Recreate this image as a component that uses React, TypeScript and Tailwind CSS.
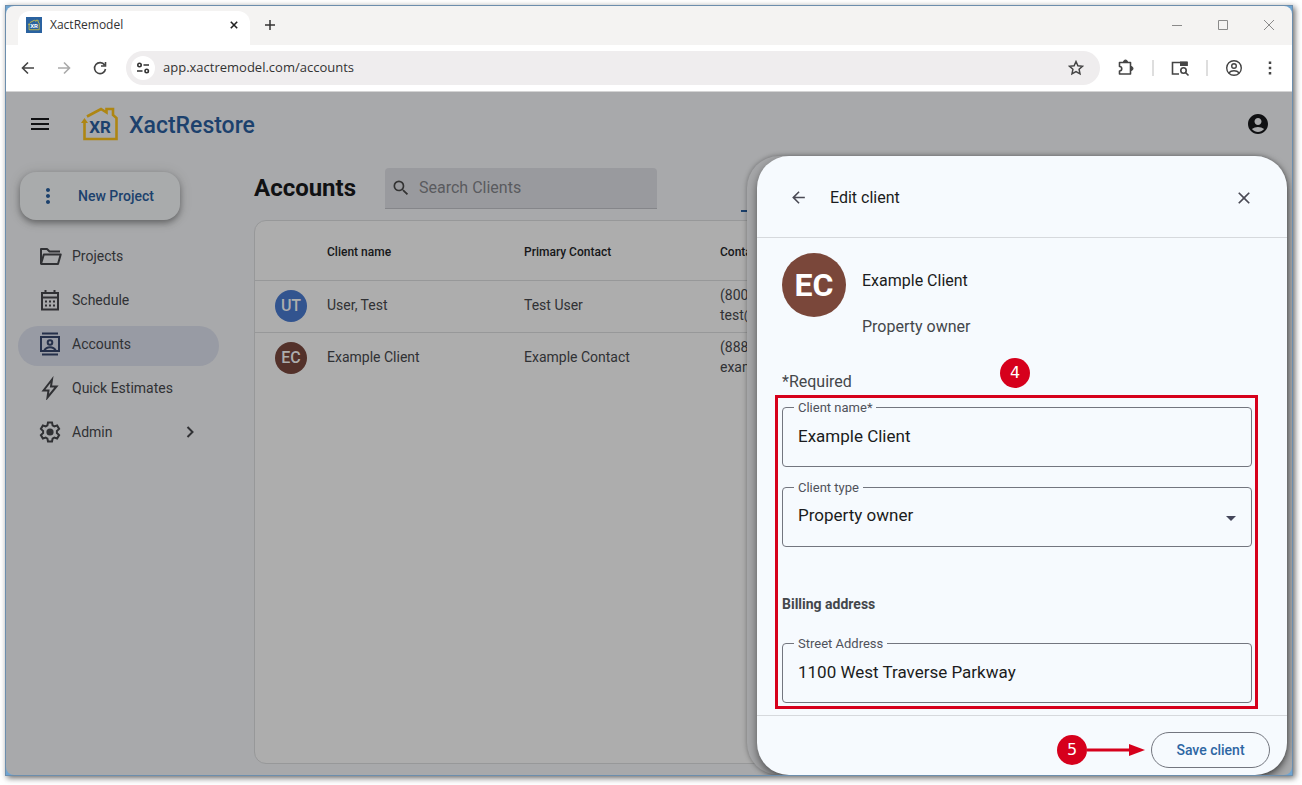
import type { ReactNode } from "react";
import { MdAccountCircle, MdArrowBack, MdClose, MdMenu, MdMoreVert, MdSearch } from "react-icons/md";
import clsx from "clsx";

const navItems = [
  { label: "Projects", icon: "folder" },
  { label: "Schedule", icon: "calendar" },
  { label: "Accounts", icon: "contacts", active: true },
  { label: "Quick Estimates", icon: "bolt" },
  { label: "Admin", icon: "gear", expandable: true },
];

const clients = [
  { initials: "UT", color: "bg-[#32548f]", name: "User, Test", contact: "Test User", phone: "(800)", email: "test@" },
  { initials: "EC", color: "bg-[#53312a]", name: "Example Client", contact: "Example Contact", phone: "(888)", email: "example" },
];

function NavIcon({ name }: { name: string }) {
  return (
    <svg viewBox="0 0 24 24" className="size-6 shrink-0" fill="none" stroke="currentColor" strokeWidth="2">
      {name === "folder" && (
        <path d="M22 7.500H11.500L9 5H3v15.500M3 20h17l2.700-9.500H5.800L3 20" strokeLinejoin="round" />
      )}
      {name === "calendar" && (
        <>
          <path d="M4 5h16v16.500H4zM4 9.500h16M7.500 2v3M16.500 2v3" />
          <path d="M7 13.500h2M11 13.500h2M15 13.500h2M7 17.500h2M11 17.500h2M15 17.500h2" />
        </>
      )}
      {name === "contacts" && (
        <>
          <path d="M4 1.500h16M4 22.500h16M3 5h18v14H3z" />
          <circle cx="12" cy="10.500" r="2.300" />
          <path d="M6 19c1.500-2.700 3.500-3.700 6-3.700s4.500 1 6 3.700" />
        </>
      )}
      {name === "bolt" && <path d="M14 3.500 5.500 14.500h5l-1 7 9-11h-5.500z" />}
      {name === "gear" && (
        <>
          <path d="M10 2.500h4l.6 2.900 1.700 1 2.800-.9 2 3.400-2.200 2v2.200l2.200 2-2 3.400-2.800-.9-1.700 1-.6 2.900h-4l-.6-2.900-1.700-1-2.800.9-2-3.400 2.200-2v-2.200l-2.200-2 2-3.400 2.800.9 1.700-1z" />
          <circle cx="12" cy="12" r="3.600" fill="currentColor" stroke="none" />
        </>
      )}
    </svg>
  );
}

function HouseMark({ className }: { className: string }) {
  return (
    <svg viewBox="0 0 38 34" className={className} fill="none" aria-hidden="true">
      <path d="M3.500 14v18h32V11l-3.500-3V2h-6.500v3.500L20 2 6 9.500" stroke="currentColor" strokeWidth="2.600" />
      <path d="M0 16 3.500 11 7 16z" fill="currentColor" />
    </svg>
  );
}

function TabStrip() {
  return (
    <div className="flex h-[39px] items-end bg-[#f4f3f2] pl-3">
      <div className="relative flex h-[34px] w-[232px] items-center rounded-t-xl bg-white pr-2 pb-1.5 pl-2">
        <span className="relative flex size-4 items-center justify-center bg-[#2a62a0] text-[#d8c63c]">
          <HouseMark className="size-3" />
          <span className="absolute top-[6px] font-['Roboto',sans-serif] text-[6px] leading-none font-bold text-white">XR</span>
        </span>
        <span className="ml-2 font-['Open_Sans',sans-serif] text-xs text-[#333]">XactRemodel</span>
        <button aria-label="Close tab" className="ml-auto flex size-4 items-center justify-center text-[#222]">
          <svg viewBox="0 0 10 10" className="size-2" stroke="currentColor" strokeWidth="2">
            <path d="M1 1l8 8M9 1 1 9" />
          </svg>
        </button>
      </div>
      <button aria-label="New tab" className="mb-[15px] ml-[15px] text-[#333]">
        <svg viewBox="0 0 10 10" className="size-2.5" stroke="currentColor" strokeWidth="1.500">
          <path d="M5 0v10M0 5h10" />
        </svg>
      </button>
      <div className="mb-[15px] ml-auto flex items-center gap-9 pr-[18px] text-[#8a8a8a]">
        {[
          { label: "Minimize", d: "M0 5.500h10" },
          { label: "Maximize", d: "M.5.5h9v9h-9z" },
          { label: "Close", d: "M0 0l10 10M10 0 0 10" },
        ].map((control) => (
          <button key={control.label} aria-label={control.label}>
            <svg viewBox="0 0 10 10" className="size-2.5 overflow-visible" fill="none" stroke="currentColor">
              <path d={control.d} />
            </svg>
          </button>
        ))}
      </div>
    </div>
  );
}

function ToolbarButton({ label, className, children }: { label: string; className?: string; children: ReactNode }) {
  return (
    <button aria-label={label} className={clsx("flex shrink-0 items-center justify-center", className)}>
      <svg viewBox="0 0 20 20" className="size-5" fill="none" stroke="currentColor" strokeWidth="1.600">
        {children}
      </svg>
    </button>
  );
}

function Toolbar() {
  return (
    <div className="flex h-[47px] shrink-0 items-center border-b border-[#d4d4d4] bg-white px-3 text-[#444]">
      <ToolbarButton label="Back">
        <path d="M16 10H5M10 4.500 4.500 10l5.500 5.500" />
      </ToolbarButton>
      <ToolbarButton label="Forward" className="ml-4 text-[#aaa]">
        <path d="M4 10h11M10 4.500l5.500 5.500-5.500 5.500" />
      </ToolbarButton>
      <ToolbarButton label="Reload" className="ml-4">
        <path d="M14.600 7A5.500 5.500 0 1 0 15.500 11M15.500 4v4h-4.500" />
      </ToolbarButton>
      <div className="ml-4 flex h-[34px] flex-1 items-center rounded-full bg-[#efedee] pr-[14px] pl-[5px]">
        <span className="flex size-6 items-center justify-center rounded-full bg-white text-[#333]">
          <svg viewBox="0 0 14 14" className="size-3.5" fill="none" stroke="currentColor" strokeWidth="1.600">
            <circle cx="3.500" cy="4" r="1.700" />
            <circle cx="10.700" cy="10" r="1.700" />
            <path d="M7.500 4H13M1 10h5.500" />
          </svg>
        </span>
        <input
          aria-label="Address"
          defaultValue="app.xactremodel.com/accounts"
          className="ml-2 min-w-0 flex-1 bg-transparent font-['Open_Sans',sans-serif] text-[13px] text-[#333] outline-none"
        />
        <ToolbarButton label="Bookmark">
          <path d="M10 3.500l1.900 4.200 4.600.5-3.400 3.100.9 4.500-4-2.300-4 2.300.9-4.500-3.400-3.100 4.600-.5z" strokeWidth="1.500" />
        </ToolbarButton>
      </div>
      <ToolbarButton label="Extensions" className="ml-4">
        <path d="M3.500 4.500h11v11.500h-11v-3c3 0 3-4.500 0-4.500z" strokeLinejoin="round" />
        <path d="M7.500 4a2 2 0 0 1 4 0zM15 8.500a2 2 0 0 1 0 4z" fill="currentColor" strokeWidth="1" />
      </ToolbarButton>
      <span className="ml-4 h-4 w-0.5 bg-[#dedede]" />
      <ToolbarButton label="Search side panel" className="ml-4">
        <path d="M9 16H2.500V4.500H17V8" />
        <path d="M10 3.500h7.500V8H10z" fill="currentColor" stroke="none" />
        <circle cx="13.500" cy="12.500" r="2.700" />
        <path d="M15.500 14.500l3 3" />
      </ToolbarButton>
      <span className="ml-4 h-4 w-0.5 bg-[#dedede]" />
      <ToolbarButton label="Profile" className="ml-4">
        <circle cx="10" cy="10" r="7.300" strokeWidth="1.400" />
        <circle cx="10" cy="8" r="2.300" strokeWidth="1.400" />
        <path d="M4.700 15c2.800-3 7.800-3 10.600 0" strokeWidth="1.400" />
      </ToolbarButton>
      <ToolbarButton label="Browser menu" className="ml-4">
        <path d="M10 3.500v2.500M10 8.800v2.500M10 14v2.500" strokeWidth="2.500" />
      </ToolbarButton>
    </div>
  );
}

function AppHeader() {
  return (
    <header className="flex h-16 shrink-0 items-center px-[22px]">
      <button aria-label="Toggle menu" className="text-[#101113]">
        <MdMenu className="size-6" />
      </button>
      <a href="#home" className="ml-[29px] flex items-center text-[#1c416d]">
        <span className="relative flex items-center justify-center text-[#ae8613]">
          <HouseMark className="h-[34px] w-[38px]" />
          <span className="absolute top-[12px] text-[17px] leading-none font-bold text-[#1c416d]">XR</span>
        </span>
        <span className="ml-2.5 pt-1 text-[23px] font-medium">XactRestore</span>
      </a>
      <button aria-label="Account" className="ml-auto text-[#101113]">
        <MdAccountCircle className="size-6" />
      </button>
    </header>
  );
}

function Sidebar() {
  return (
    <nav className="w-[213px] shrink-0 pt-4 pl-3 text-[#303134]">
      <button className="ml-0.5 flex h-12 w-40 items-center rounded-2xl bg-[#a9abac] pl-4 text-sm font-medium text-[#1c416d] shadow-[0_3px_6px_rgba(0,0,0,0.35),0_1px_14px_rgba(0,0,0,0.12)]">
        <MdMoreVert className="size-6" />
        <span className="ml-[18px]">New Project</span>
      </button>
      <ul className="mt-[18px] flex flex-col gap-1">
        {navItems.map((item) => (
          <li key={item.label}>
            <a
              href="#nav"
              className={clsx(
                "flex h-10 items-center rounded-full pb-1 pl-5 text-sm",
                item.active && "bg-[#989ba4] text-[#25304a]",
              )}
            >
              <NavIcon name={item.icon} />
              <span className="ml-2.5 text-[#303134]">{item.label}</span>
              {item.expandable && (
                <svg viewBox="0 0 12 12" className="mr-[23px] ml-auto size-3" fill="none" stroke="currentColor" strokeWidth="2">
                  <path d="M3.500 1l5 5-5 5" />
                </svg>
              )}
            </a>
          </li>
        ))}
      </ul>
    </nav>
  );
}

function AccountsPage() {
  return (
    <main className="ml-[35px] flex min-w-0 flex-1 flex-col pt-3 pr-6 pb-[11px]">
      <div className="flex items-start">
        <h1 className="pt-1 text-2xl leading-8 font-bold text-[#101113]">Accounts</h1>
        <label className="ml-[29px] flex h-[41px] w-[272px] items-center rounded-t border-b border-[#85868a] bg-[#999a9e] pl-1.5 text-[#333]">
          <MdSearch className="size-5 shrink-0" />
          <input
            aria-label="Search Clients"
            placeholder="Search Clients"
            className="ml-2 min-w-0 flex-1 bg-transparent text-base outline-none placeholder:text-[#5a5b5e]"
          />
        </label>
        <div className="ml-[84px] h-[44px] flex-1 border-b-2 border-[#1c416d]" />
      </div>
      <div className="mt-2 flex-1 overflow-hidden rounded-xl border border-[#979899] bg-[#adadad]">
        <table className="w-full table-fixed text-left text-sm text-[#303134]">
          <colgroup>
            <col className="w-[72px]" />
            <col className="w-[197px]" />
            <col className="w-[196px]" />
            <col />
          </colgroup>
          <thead>
            <tr className="h-[59px] border-b border-[#979899] text-xs text-[#161719]">
              <th />
              <th className="pt-1 font-medium">Client name</th>
              <th className="pt-1 font-medium">Primary Contact</th>
              <th className="pt-1 font-medium">Contact</th>
            </tr>
          </thead>
          <tbody>
            {clients.map((client) => (
              <tr key={client.initials} className="h-[52px] border-b border-[#979899] last:border-b-0">
                <td className="pl-5">
                  <span
                    className={clsx(
                      "flex size-8 items-center justify-center rounded-full text-base font-medium text-[#adadad]",
                      client.color,
                    )}
                  >
                    {client.initials}
                  </span>
                </td>
                <td className="pb-0.5">{client.name}</td>
                <td className="pb-0.5">{client.contact}</td>
                <td className="pb-0.5">
                  {client.phone}
                  <br />
                  {client.email}
                </td>
              </tr>
            ))}
          </tbody>
        </table>
      </div>
    </main>
  );
}

function OutlinedField({ id, label, children }: { id: string; label: string; children: ReactNode }) {
  return (
    <div className="relative h-[60px] rounded border border-[#73767f]">
      <label htmlFor={id} className="absolute -top-2 left-[11px] bg-[#f6fafe] px-1 text-[13px] leading-4 text-[#50525b]">
        {label}
      </label>
      {children}
    </div>
  );
}

const fieldText = "h-full w-full appearance-none bg-transparent px-[15px] pb-0.5 text-[17px] text-[#1b1c20] outline-none";

function StepBadge({ step }: { step: number }) {
  return (
    <span className="flex size-[30px] shrink-0 items-center justify-center rounded-full bg-[#d6001c] font-['DejaVu_Sans',sans-serif] text-base text-white">
      {step}
    </span>
  );
}

function EditClientSheet() {
  return (
    <section
      aria-label="Edit client"
      className="absolute top-16 right-[5px] bottom-0 flex w-[530px] flex-col rounded-[32px] bg-[#f6fafe] shadow-[0_4px_9px_rgba(0,0,0,0.5)]"
    >
      <div className="flex h-[82px] shrink-0 items-center border-b border-[#d6d9dd] pt-0.5 pr-[33px] pl-8 text-[#4a4a55]">
        <button aria-label="Back">
          <MdArrowBack className="size-[19px]" />
        </button>
        <h2 className="ml-[22px] text-base text-[#1b1c20]">Edit client</h2>
        <button aria-label="Close" className="ml-auto">
          <MdClose className="size-5" />
        </button>
      </div>

      <form className="min-h-0 flex-1 pr-[35px] pl-[25px]">
        <div className="flex pt-[15px]">
          <span className="flex size-16 items-center justify-center rounded-full bg-[#7a473a] text-[32px] font-bold text-white">
            EC
          </span>
          <div className="ml-4 pt-4 text-base">
            <p className="text-[#1b1c20]">Example Client</p>
            <p className="mt-[22px] text-[#44474b]">Property owner</p>
          </div>
        </div>
        <div className="relative mt-[31px] text-base text-[#44474b]">
          *Required
          <div className="absolute -top-3 left-[218px]">
            <StepBadge step={4} />
          </div>
        </div>

        <div className="relative mt-[13px]">
          <OutlinedField id="client-name" label="Client name*">
            <input id="client-name" defaultValue="Example Client" className={fieldText} />
          </OutlinedField>
          <div className="mt-5">
            <OutlinedField id="client-type" label="Client type">
              <select id="client-type" className={fieldText}>
                <option>Property owner</option>
              </select>
              <svg viewBox="0 0 10 5" className="pointer-events-none absolute top-7 right-[15px] h-[5px] w-2.5" fill="#44465a">
                <path d="M0 0h10L5 5z" />
              </svg>
            </OutlinedField>
          </div>
          <h3 className="mt-[47px] mb-[29px] text-sm font-bold text-[#44474b]">Billing address</h3>
          <OutlinedField id="street" label="Street Address">
            <input id="street" defaultValue="1100 West Traverse Parkway" className={fieldText} />
          </OutlinedField>
          <div className="pointer-events-none absolute -top-3 -right-1.5 -bottom-1.5 -left-[7px] border-3 border-[#d6001c]" />
        </div>
      </form>

      <div className="flex h-[60px] shrink-0 items-center justify-end border-t border-[#d6d9dd] pt-2 pr-[17px]">
        <StepBadge step={5} />
        <svg viewBox="0 0 60 12" className="mr-1 h-3 w-[60px]" aria-hidden="true">
          <path d="M0 6h46" stroke="#d6001c" strokeWidth="3" />
          <path d="M42 0l16 6-16 6z" fill="#d6001c" />
        </svg>
        <button className="h-9 min-w-[119px] rounded-full border border-[#73767f] text-sm font-medium text-[#2d66a3]">
          Save client
        </button>
      </div>
    </section>
  );
}

export default function App() {
  return (
    <div className="flex h-screen bg-white pt-[5px] pr-[9px] pb-[9px] pl-[5px] font-['Roboto',sans-serif]">
      <div className="flex min-w-0 flex-1 flex-col border border-[#6c8ead] bg-[#6fa5d2] shadow-[2px_2px_6px_rgba(0,0,0,0.6)]">
        <div className="flex min-h-0 flex-1 flex-col overflow-hidden rounded-lg">
          <TabStrip />
          <Toolbar />
          <div className="relative flex min-h-0 flex-1 flex-col bg-[#a8a9ab]">
            <AppHeader />
            <div className="flex min-h-0 flex-1">
              <Sidebar />
              <AccountsPage />
            </div>
            <div className="absolute top-16 right-[5px] bottom-0 w-[540px] rounded-[32px] bg-[#a5a6a8] shadow-[0_0_5px_rgba(0,0,0,0.35)]" />
            <EditClientSheet />
          </div>
        </div>
      </div>
    </div>
  );
}
